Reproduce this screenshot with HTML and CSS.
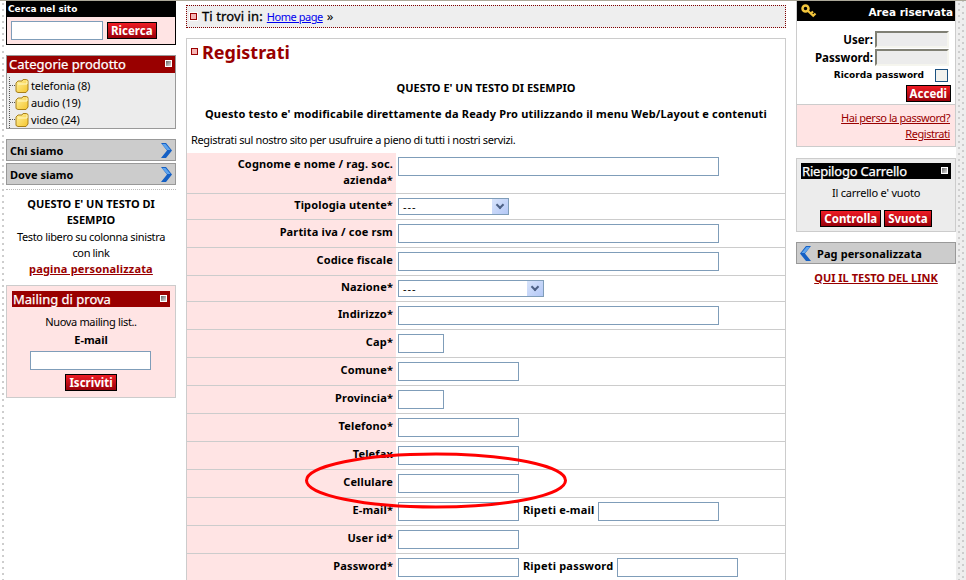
FILE: index.html
```html
<!DOCTYPE html>
<html lang="it">
<head>
    <meta charset="UTF-8">
    <title>Registrati</title>
    <link rel="stylesheet" href="styles.css">
</head>
<body>
    <svg width="0" height="0" class="defs">
        <defs>
            <linearGradient id="folder-fill" x1="0" y1="0" x2="1" y2="1">
                <stop offset="0" stop-color="#fff2a0"/>
                <stop offset="1" stop-color="#f5c52c"/>
            </linearGradient>
            <symbol id="folder" viewBox="0 0 14 14">
                <path d="M1 4V12.500L3 13.500H11L13 11V1.500L11.500 .5H8L7 2H3Z" fill="url(#folder-fill)" stroke="#a8801a"/>
                <path d="M3 5H12V2" fill="none" stroke="#fff8c8"/>
            </symbol>
            <symbol id="chev-right" viewBox="0 0 11 15">
                <path d="M0 0H5L11 7.500L5 15H0L6 7.500Z" fill="#1560c4"/>
                <path d="M1 1H4.500L9.500 7H6Z" fill="#5ea4ee"/>
            </symbol>
            <symbol id="chev-left" viewBox="0 0 11 15">
                <path d="M11 0H6L0 7.500L6 15H11L5 7.500Z" fill="#1560c4"/>
                <path d="M10 1H6.500L1.500 7H5Z" fill="#5ea4ee"/>
            </symbol>
        </defs>
    </svg>

    <div class="page">
        <div class="col">
            <div class="search-box">
                <div class="search-head">Cerca nel sito</div>
                <div class="search-body">
                    <input type="text" class="field search-field">
                    <button class="btn">Ricerca</button>
                </div>
            </div>

            <div class="cat-box">
                <div class="red-head">Categorie prodotto <i class="win-icon"></i></div>
                <ul class="tree">
                    <li><svg class="folder"><use href="#folder"/></svg>telefonia (8)</li>
                    <li><svg class="folder"><use href="#folder"/></svg>audio (19)</li>
                    <li><svg class="folder"><use href="#folder"/></svg>video (24)</li>
                </ul>
            </div>

            <div class="menu-group">
                <a class="menu-item">Chi siamo <svg class="chev"><use href="#chev-right"/></svg></a>
                <a class="menu-item">Dove siamo <svg class="chev"><use href="#chev-right"/></svg></a>
            </div>

            <div class="free-text">
                <b>QUESTO E' UN TESTO DI ESEMPIO</b><br>
                <span class="tight">Testo libero su colonna sinistra con link</span><br>
                <a class="red-link wide">pagina personalizzata</a>
            </div>

            <div class="mail-box">
                <div class="red-head">Mailing di prova <i class="win-icon"></i></div>
                <p class="mail-line tight">Nuova mailing list..</p>
                <p class="mail-label">E-mail</p>
                <input type="text" class="field mail-field">
                <button class="btn">Iscriviti</button>
            </div>
        </div>

        <div class="main">
            <div class="crumbs"><i class="bullet"></i><span class="crumb-label">Ti trovi in:</span> <a class="crumb-link">Home page</a> <span class="crumb-sep">»</span></div>

            <div class="content">
                <h1><i class="bullet"></i>Registrati</h1>
                <p class="intro first"><b>QUESTO E' UN TESTO DI ESEMPIO</b></p>
                <p class="intro"><b class="wide">Questo testo e' modificabile direttamente da Ready Pro utilizzando il menu Web/Layout e contenuti</b></p>
                <p class="lead tight">Registrati sul nostro sito per usufruire a pieno di tutti i nostri servizi.</p>

                <table class="form">
                    <tr class="tall"><th>Cognome e nome / rag. soc. azienda*</th><td><input class="field big"></td></tr>
                    <tr class="short"><th>Tipologia utente*</th><td><span class="select sel-s">---<i class="sel-arrow"></i></span></td></tr>
                    <tr><th>Partita iva / coe rsm</th><td><input class="field big"></td></tr>
                    <tr><th>Codice fiscale</th><td><input class="field big"></td></tr>
                    <tr class="short"><th>Nazione*</th><td><span class="select sel-m">---<i class="sel-arrow"></i></span></td></tr>
                    <tr><th>Indirizzo*</th><td><input class="field big"></td></tr>
                    <tr><th>Cap*</th><td><input class="field small"></td></tr>
                    <tr><th>Comune*</th><td><input class="field mid"></td></tr>
                    <tr><th>Provincia*</th><td><input class="field small"></td></tr>
                    <tr><th>Telefono*</th><td><input class="field mid"></td></tr>
                    <tr><th>Telefax</th><td><input class="field mid"></td></tr>
                    <tr><th>Cellulare</th><td><input class="field mid"></td></tr>
                    <tr><th>E-mail*</th><td><input class="field mid"> <b class="repeat">Ripeti e-mail</b> <input class="field mid"></td></tr>
                    <tr><th>User id*</th><td><input class="field mid"></td></tr>
                    <tr><th>Password*</th><td><input class="field mid"> <b class="repeat">Ripeti password</b> <input class="field mid"></td></tr>
                </table>
            </div>
        </div>

        <div class="col">
            <div class="login-box">
                <div class="login-head">
                    <svg class="key" viewBox="0 0 16 14">
                        <circle cx="4.500" cy="4.500" r="3" fill="none" stroke="#f2c53d" stroke-width="2.500"/>
                        <path d="M6.500 6.500L13 12.500M10 9.500L12 7.500M12.500 11.500L14.500 9.500" fill="none" stroke="#f2c53d" stroke-width="2.200"/>
                    </svg>
                    Area riservata
                </div>
                <div class="login-body">
                    <div class="login-row"><label>User:</label><input class="login-field"></div>
                    <div class="login-row"><label>Password:</label><input class="login-field"></div>
                    <div class="remember"><span>Ricorda password</span><i class="check"></i></div>
                    <div class="login-btn"><button class="btn">Accedi</button></div>
                </div>
                <div class="login-links">
                    <a>Hai perso la password?</a>
                    <a>Registrati</a>
                </div>
            </div>

            <div class="cart-box">
                <div class="black-head">Riepilogo Carrello <i class="win-icon"></i></div>
                <p class="cart-empty">Il carrello e' vuoto</p>
                <div class="cart-btns"><button class="btn">Controlla</button><button class="btn">Svuota</button></div>
            </div>

            <a class="menu-item left-chev"><svg class="chev"><use href="#chev-left"/></svg>Pag personalizzata</a>
            <p class="right-link"><a class="red-link">QUI IL TESTO DEL LINK</a></p>
        </div>
    </div>

    <!-- evidenziazione a mano sopra il form -->
    <svg class="circle-mark" width="266" height="60" viewBox="0 0 266 60">
        <ellipse cx="132" cy="28.500" rx="129.500" ry="26.500" fill="none" stroke="#ff0000" stroke-width="3"/>
    </svg>
</body>
</html>
```

FILE: styles.css
```css
html, body {
  height: 580px;
  overflow: hidden;
}

body {
  margin: 0;
  position: relative;
  background: #fff;
  font-family: 'Noto Sans', sans-serif;
  font-size: 11px;
  color: #000;
  border-top: 1px solid #aca899;
  box-sizing: border-box;
}

b, th {
  font-weight: 700;
}

.wide {
  letter-spacing: 0.165px;
}

.tight {
  letter-spacing: -0.35px;
}

.defs {
  position: absolute;
}

.page {
  display: grid;
  grid-template-columns: 170px 600px 160px;
  column-gap: 10px;
  padding: 0 10px 0 6px;
  width: 966px;
  height: 579px;
  box-sizing: border-box;
  background:
    radial-gradient(circle, #ccc 0.7px, transparent 1px) 1px 0 / 4px 6px repeat-y,
    radial-gradient(circle, #ccc 0.7px, transparent 1px) 957px 0 / 4px 6px repeat-y,
    radial-gradient(circle, #ccc 0.7px, transparent 1px) 961px 3px / 4px 6px repeat-y,
    linear-gradient(#eee, #eee) right top / 10px 100% no-repeat;
}

.field {
  border: 1px solid #7f9db9;
  background: #fff;
  padding: 0;
  box-sizing: border-box;
  height: 19px;
  vertical-align: middle;
}

.btn {
  font-family: 'Noto Sans', sans-serif;
  font-size: 11.500px;
  font-weight: 700;
  color: #fff;
  border: 1px solid #000;
  background: linear-gradient(#ee1c25, #99000a);
  height: 17px;
  padding: 0 3px;
  line-height: 14px;
  box-sizing: border-box;
}

.win-icon {
  width: 5px;
  height: 5px;
  border: 1px solid #fff;
  background: linear-gradient(135deg, #666, #ddd);
  position: absolute;
  right: 3px;
  top: 4px;
}

.bullet {
  display: inline-block;
  flex: none;
  width: 5px;
  height: 5px;
  border: 1px solid #900;
  background: #f5b5b5;
  outline: 1px solid #fff;
}

.red-head {
  position: relative;
  background: #990000;
  color: #fff;
  font-size: 13px;
  -webkit-text-stroke: 0.25px #fff;
  line-height: 16px;
  height: 16px;
  padding-left: 2px;
}

.red-link {
  color: #990000;
  font-weight: 700;
  text-decoration: underline;
}

/* colonna sinistra */
.search-box {
  border: 1px solid #000;
  background: #ffe4e4;
  height: 44px;
  box-sizing: border-box;
}

.search-head {
  background: #000;
  color: #fff;
  font-family: 'DejaVu Sans', sans-serif;
  font-size: 9px;
  font-weight: bold;
  line-height: 15px;
  height: 15px;
  padding-left: 1px;
}

.search-body {
  display: flex;
  align-items: center;
  gap: 4px;
  padding: 4px 0 0 4px;
}

.search-field {
  width: 92px;
}

.cat-box {
  margin-top: 10px;
  border: 1px solid #999;
  background: #ececec;
  height: 74px;
  box-sizing: border-box;
}

.cat-box .red-head {
  height: 17px;
}

.tree {
  list-style: none;
  margin: 4px 0 0 2px;
  padding: 0;
  border-left: 1px dotted #555;
  height: 51px;
  line-height: 17px;
  letter-spacing: -0.15px;
}

.tree li {
  display: flex;
  align-items: center;
  height: 17px;
}

.tree li::before {
  content: '';
  width: 5px;
  border-top: 1px dotted #555;
}

.folder {
  width: 14px;
  height: 14px;
  margin-right: 2px;
}

.menu-group {
  margin-top: 10px;
  display: flex;
  flex-direction: column;
  gap: 2px;
  padding-bottom: 4px;
  border-bottom: 1px dotted #bbb;
}

.menu-item {
  display: flex;
  justify-content: space-between;
  align-items: center;
  height: 22px;
  box-sizing: border-box;
  border: 1px solid #999;
  background: #ccc;
  font-weight: 700;
  padding: 0 3px;
}

.chev {
  width: 11px;
  height: 15px;
}

.free-text {
  text-align: center;
  line-height: 16.300px;
  padding: 6px 6px 0;
  height: 95px;
  box-sizing: border-box;
}

.mail-box {
  border: 1px solid #ccc;
  background: #ffe4e4;
  height: 113px;
  padding: 5px;
  box-sizing: border-box;
  text-align: center;
}

.mail-box .red-head {
  text-align: left;
  padding-left: 1px;
}

.mail-line {
  margin: 6px 0 0;
  line-height: 17px;
}

.mail-label {
  margin: 1px 0 0;
  font-weight: 700;
  line-height: 17px;
}

.mail-field {
  width: 121px;
  margin: 3px 0 4px 18px;
  display: block;
}

/* colonna centrale */
.crumbs {
  margin-top: 4px;
  height: 23px;
  box-sizing: border-box;
  border: 1px dotted #800000;
  background: #eee;
  padding-left: 3px;
  line-height: 21px;
  display: flex;
  align-items: center;
  gap: 4px;
}

.crumb-label {
  font-size: 13px;
  -webkit-text-stroke: 0.3px #000;
  margin-left: 1px;
  letter-spacing: 0.1px;
}

.crumb-link {
  color: #0000ee;
  text-decoration: underline;
  letter-spacing: -0.45px;
}

.crumb-sep {
  font-size: 13px;
}

.content {
  margin-top: 10px;
  border: 1px solid #ccc;
  border-bottom: 0;
}

h1 {
  margin: 0;
  color: #990000;
  font-size: 18px;
  font-weight: 700;
  line-height: 26px;
  padding: 0 0 0 4px;
  display: flex;
  align-items: center;
  gap: 4px;
}

h1 .bullet {
  margin-top: -2px;
}

.intro {
  margin: 0;
  text-align: center;
  line-height: 26px;
  white-space: nowrap;
}

.intro.first {
  margin-top: 10px;
}

.lead {
  margin: 0;
  padding-left: 4px;
  line-height: 26px;
}

.form {
  width: 598px;
  border-collapse: collapse;
  table-layout: fixed;
  margin-top: 0;
}

.form tr {
  height: 28px;
  border-bottom: 1px solid #ccc;
}

.form tr.tall {
  height: 40px;
}

.form tr.tall td {
  vertical-align: top;
  padding-top: 4px;
}

.form tr.short {
  height: 26px;
}

.form th {
  width: 209px;
  background: #ffe4e4;
  text-align: right;
  font-size: 11px;
  letter-spacing: 0.15px;
  line-height: 16px;
  padding: 0 3px 2px 20px;
  box-sizing: border-box;
}

.form td {
  padding: 0 0 0 2px;
  white-space: nowrap;
}

.big {
  width: 321px;
}

.mid {
  width: 121px;
}

.small {
  width: 46px;
}

.repeat {
  margin: 0 1px;
  letter-spacing: 0.2px;
}

.select {
  display: inline-block;
  position: relative;
  height: 17px;
  line-height: 15px;
  border: 1px solid #7f9db9;
  padding-left: 4px;
  box-sizing: border-box;
  vertical-align: middle;
  letter-spacing: 1px;
}

.sel-s {
  width: 111px;
}

.sel-m {
  width: 146px;
}

.sel-arrow {
  position: absolute;
  right: 0;
  top: 0;
  width: 16px;
  height: 15px;
  background: linear-gradient(135deg, #d8e4fb, #b4c8f6);
}

.sel-arrow::after {
  content: '';
  position: absolute;
  left: 5px;
  top: 3px;
  width: 4px;
  height: 4px;
  border: solid #4d6185;
  border-width: 0 2px 2px 0;
  transform: rotate(45deg);
}

/* colonna destra */
.login-box {
  border: 1px solid #ccc;
  border-top: 0;
  height: 146px;
  box-sizing: border-box;
}

.login-head {
  position: relative;
  background: #000;
  color: #fff;
  font-family: 'DejaVu Sans', sans-serif;
  font-weight: bold;
  text-align: right;
  height: 20px;
  line-height: 22px;
  padding-right: 2px;
  font-size: 10.500px;
}

.key {
  position: absolute;
  left: 4px;
  top: 3px;
  width: 16px;
  height: 14px;
}

.login-body {
  height: 83px;
  padding-top: 9px;
  box-sizing: border-box;
}

.login-row {
  display: flex;
  justify-content: flex-end;
  align-items: center;
  gap: 2px;
  height: 18px;
  font-size: 11.500px;
  font-weight: 700;
  padding-right: 6px;
}

.login-row label {
  padding-top: 1px;
}

.login-field {
  width: 74px;
  height: 17px;
  box-sizing: border-box;
  border: 2px solid #f5f5ee;
  border-top-color: #808074;
  border-left-color: #808074;
  background: #ececec;
  padding: 0;
}

.remember {
  display: flex;
  justify-content: flex-end;
  align-items: center;
  height: 18px;
  font-family: 'DejaVu Sans', sans-serif;
  font-size: 9px;
  font-weight: bold;
  padding-right: 7px;
}

.remember span {
  margin-right: 11px;
}

.check {
  width: 13px;
  height: 13px;
  border: 1px solid #1c5180;
  box-sizing: border-box;
  background: #f2f2ee;
}

.login-btn {
  text-align: right;
  padding: 1px 4px 0 0;
}

.login-links {
  border-top: 1px solid #ccc;
  background: #ffe4e4;
  height: 42px;
  box-sizing: border-box;
  text-align: right;
  padding: 5px 5px 0 0;
  line-height: 16px;
  letter-spacing: -0.45px;
}

.login-links a {
  display: block;
  color: #990000;
  text-decoration: underline;
}

.cart-box {
  margin-top: 11px;
  border: 1px solid #ccc;
  background: #ececec;
  height: 74px;
  padding: 4px;
  box-sizing: border-box;
  text-align: center;
}

.black-head {
  position: relative;
  background: #000;
  color: #fff;
  font-size: 13px;
  -webkit-text-stroke: 0.25px #fff;
  letter-spacing: -0.2px;
  line-height: 16px;
  height: 16px;
  padding-left: 1px;
  text-align: left;
}

.cart-empty {
  margin: 6px 0 0;
  line-height: 16px;
  letter-spacing: -0.2px;
}

.cart-btns {
  margin-top: 9px;
  display: flex;
  justify-content: center;
  gap: 3px;
}

.left-chev {
  margin-top: 10px;
  justify-content: flex-start;
  gap: 6px;
  letter-spacing: 0.1px;
}

.right-link {
  margin: 6px 0 0;
  text-align: center;
  line-height: 16px;
}

/* ellisse rossa sopra il form */
.circle-mark {
  position: absolute;
  left: 304px;
  top: 451px;
}
```
